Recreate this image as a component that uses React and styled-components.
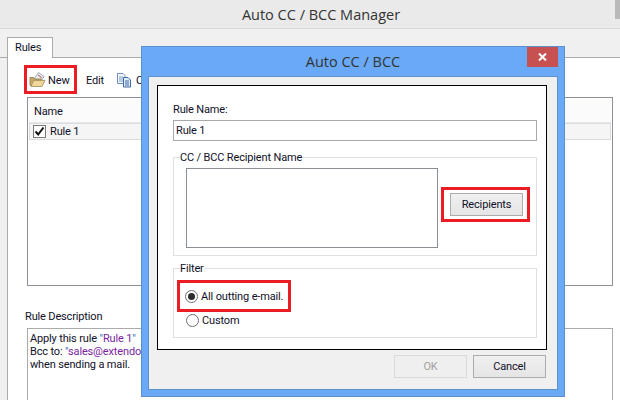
import React from 'react';
import styled, { createGlobalStyle } from 'styled-components';

const GlobalStyle = createGlobalStyle`
  html, body {
    margin: 0;
    padding: 0;
    background: #f0f0f0;
  }

  body {
    font-family: Roboto, "Liberation Sans", sans-serif;
    font-size: 11px;
    letter-spacing: -0.15px;
    color: #101028;
  }

  * {
    box-sizing: border-box;
  }
`;

const Screen = styled.div`
  width: 620px;
  height: 400px;
  position: relative;
  overflow: hidden;
  display: flex;
  flex-direction: column;
`;

const TitleBar = styled.div`
  height: 29px;
  flex: none;
  background: #eaeaea;
  border-bottom: 1px solid #d8d8d8;
  display: flex;
  justify-content: center;
  align-items: center;
  font-family: "Open Sans", sans-serif;
  font-size: 14.5px;
  letter-spacing: 0;
  color: #333;
  padding-left: 22px;
  position: relative;
`;

const ScrollThumb = styled.div`
  position: absolute;
  top: 0;
  right: 0;
  width: 5px;
  height: 19px;
  background: #b9b9b9;
`;

const TabStrip = styled.div`
  height: 29px;
  flex: none;
  padding: 8px 0 0 7px;
  display: flex;
  align-items: flex-end;
  border-bottom: 1px solid #ababab;
`;

const Tab = styled.div`
  width: 46px;
  height: 21px;
  margin-bottom: -1px;
  background: #fff;
  border: 1px solid #ababab;
  border-bottom: none;
  padding: 1px 0 0 7px;
  line-height: 17px;
  position: relative;
  z-index: 1;
`;

const TabPanel = styled.div`
  flex: 1;
  min-height: 0;
  margin-left: 7px;
  background: #fff;
  border-left: 1px solid #ababab;
  padding: 7px 7px 0 16px;
  display: flex;
  flex-direction: column;
`;

const Toolbar = styled.div`
  height: 29px;
  flex: none;
  display: flex;
  align-items: center;
`;

const Highlight = styled.div`
  border: 3px solid #ec1c24;
`;

const ToolLabel = styled.span`
  padding-top: 1px;
`;

const NewButton = styled(Highlight)`
  width: 53px;
  height: 29px;
  padding-left: 2px;
  display: flex;
  align-items: center;
  gap: 2px;
`;

const ToolItem = styled.div`
  margin-left: ${({ $gap }) => $gap};
  display: flex;
  align-items: center;
  gap: 4px;
`;

const ListBox = styled.div`
  height: 189px;
  flex: none;
  margin: 3px 0 0 3px;
  border: 1px solid #8b9097;
  padding: 1px;
`;

const ListHeader = styled.div`
  height: 24px;
  background: #fbfbfc;
  border-bottom: 1px solid #e6e9f0;
  padding: 1px 0 0 5px;
  display: flex;
  align-items: center;
`;

const ListRow = styled.div`
  height: 17px;
  background: #f5f5f5;
  border: 1px solid #dcdcdc;
  display: flex;
  align-items: center;
  gap: 4px;
  padding-left: 3px;
`;

const CheckBox = styled.div`
  width: 13px;
  height: 13px;
  border: 1px solid #7a7a7a;
  background: #fff;
  display: flex;
  align-items: center;
  justify-content: center;
`;

const SectionLabel = styled.div`
  margin: 23px 0 0 1px;
  height: 19px;
  line-height: 16px;
`;

const DescriptionBox = styled.div`
  flex: 1;
  margin-left: 3px;
  border: 1px solid #ababab;
  border-bottom: none;
  padding: 3px 0 0 2px;
  line-height: 13px;
`;

const Quoted = styled.span`
  color: ${({ $part }) => ($part === 'mark' ? '#2f6fb5' : '#7a1fa2')};
`;

const Dialog = styled.div`
  position: absolute;
  left: 141px;
  top: 46px;
  width: 424px;
  height: 351px;
  background: #69a9f6;
  border: 1px solid #5a8fd0;
  padding: 0 6px 6px;
  display: flex;
  flex-direction: column;
`;

const DialogTitle = styled.div`
  height: 29px;
  flex: none;
  display: flex;
  justify-content: center;
  align-items: center;
  font-family: "Open Sans", sans-serif;
  font-size: 14.5px;
  letter-spacing: 0;
  color: #333;
  position: relative;
`;

const CloseButton = styled.div`
  position: absolute;
  top: 0;
  right: 0;
  width: 31px;
  height: 20px;
  background: #c75050;
  display: flex;
  align-items: center;
  justify-content: center;
`;

const DialogBody = styled.div`
  flex: 1;
  background: #f0f0f0;
  border: 1px solid #5e92cf;
  padding: 8px 10px 0 8px;
  display: flex;
  flex-direction: column;
`;

const Frame = styled.div`
  height: 265px;
  flex: none;
  background: #fff;
  border: 1px solid #000;
  padding: 14px 9px 0 15px;
`;

const FieldLabel = styled.div`
  height: 20px;
  line-height: 20px;
`;

const TextInput = styled.div`
  height: 21px;
  background: #fff;
  border: 1px solid #a9a9a9;
  padding-left: 2px;
  line-height: 19px;
`;

const GroupBox = styled.fieldset`
  margin: ${({ $top }) => $top} 0 0;
  padding: 0;
  height: ${({ $height }) => $height};
  border: 1px solid #e0e0e0;
  position: relative;
`;

const GroupLegend = styled.legend`
  position: absolute;
  top: -8px;
  left: 6px;
  padding: 0;
  background: #fff;
  line-height: 16px;
`;

const RecipientRow = styled.div`
  padding: 10px 0 0 12px;
  display: flex;
  align-items: flex-start;
`;

const RecipientList = styled.div`
  width: 252px;
  height: 80px;
  border: 1px solid #8b9097;
`;

const RecipientHighlight = styled(Highlight)`
  width: 89px;
  height: 35px;
  margin: 19px 0 0 3px;
  display: flex;
  align-items: center;
  justify-content: center;
  padding-left: 2px;
`;

const PushButton = styled.div`
  width: 73px;
  height: 23px;
  border: 1px solid ${({ disabled }) => (disabled ? '#d9d9d9' : '#acacac')};
  background: ${({ disabled }) => (disabled
    ? '#efefef'
    : 'linear-gradient(#f0f0f0, #e5e5e5)')};
  color: ${({ disabled }) => (disabled ? '#a0a0a0' : 'inherit')};
  display: flex;
  align-items: center;
  justify-content: center;
`;

const RadioHighlight = styled(Highlight)`
  width: 114px;
  height: 32px;
  margin: 11px 0 0 3px;
  padding-left: 5px;
  display: flex;
  align-items: center;
  gap: 3px;
  white-space: nowrap;
`;

const RadioLine = styled.div`
  margin: 0 0 0 12px;
  height: 17px;
  display: flex;
  align-items: center;
  gap: 3px;
`;

const RadioDot = styled.div`
  width: 13px;
  height: 13px;
  border-radius: 50%;
  border: 1px solid #6f6f6f;
  background: #fff;
  display: flex;
  align-items: center;
  justify-content: center;

  &::after {
    content: "";
    width: 7px;
    height: 7px;
    border-radius: 50%;
    background: ${({ $checked }) => ($checked ? '#2b2b2b' : 'transparent')};
  }
`;

const DialogActions = styled.div`
  margin-top: 5px;
  padding-right: 1px;
  display: flex;
  justify-content: flex-end;
  gap: 6px;
`;

const FolderIcon = () => (
  <svg width="17" height="17" viewBox="0 0 17 17">
    <path d="M5 8 L9.5 1.5 L15 5.5 L13 9 Z" fill="#eef2f6" stroke="#8a94a4" strokeWidth="0.8" />
    <path d="M9 4 L13 7" stroke="#c2808a" strokeWidth="1.4" />
    <path d="M1 6.5 H4.5 L5.5 8 H12 V15 H2 L1 14 Z" fill="#c9a866" stroke="#8d7a4d" strokeWidth="0.8" />
    <path d="M2 15.5 L4.5 9.5 H16 L13 15.5 Z" fill="#f0d698" stroke="#a5905a" strokeWidth="0.8" />
  </svg>
);

const CopyIcon = () => (
  <svg width="16" height="16" viewBox="0 0 16 16">
    <path d="M1.5 1.5 H7 L9 3.5 V11.5 H1.5 Z" fill="#f2f6fb" stroke="#6f8fbb" />
    <path d="M3 5 H7 M3 7 H7 M3 9 H7" stroke="#7f9fc9" />
    <path d="M7.5 5.5 H12 L14.5 8 V15 H7.5 Z" fill="#dfeaf7" stroke="#3f6aa5" />
    <path d="M9 9 H13 M9 11 H13 M9 13 H13" stroke="#3f6aa5" />
  </svg>
);

const CheckMark = () => (
  <svg width="11" height="11" viewBox="0 0 11 11">
    <path d="M1.5 5.5 L4.2 8.5 L9.5 1.5" fill="none" stroke="#111" strokeWidth="2" />
  </svg>
);

const CloseGlyph = () => (
  <svg width="9" height="8" viewBox="0 0 9 8">
    <path d="M1 0.5 L8 7.5 M8 0.5 L1 7.5" stroke="#fff" strokeWidth="2" />
  </svg>
);

const App = () => (
  <Screen>
    <GlobalStyle />
    <TitleBar>
      Auto CC / BCC Manager
      <ScrollThumb />
    </TitleBar>
    <TabStrip>
      <Tab>Rules</Tab>
    </TabStrip>
    <TabPanel>
      <Toolbar>
        <NewButton>
          <FolderIcon />
          <ToolLabel>New</ToolLabel>
        </NewButton>
        <ToolItem $gap="9px"><ToolLabel>Edit</ToolLabel></ToolItem>
        <ToolItem $gap="12px">
          <CopyIcon />
          <ToolLabel>Copy</ToolLabel>
        </ToolItem>
      </Toolbar>
      <ListBox>
        <ListHeader>Name</ListHeader>
        <ListRow>
          <CheckBox><CheckMark /></CheckBox>
          Rule 1
        </ListRow>
      </ListBox>
      <SectionLabel>Rule Description</SectionLabel>
      <DescriptionBox>
        Apply this rule <Quoted $part="mark">"</Quoted><Quoted>Rule 1</Quoted><Quoted $part="mark">"</Quoted>
        <br />
        Bcc to: <Quoted $part="mark">"</Quoted><Quoted>sales@extendoffice.com</Quoted>
        <br />
        when sending a mail.
      </DescriptionBox>
    </TabPanel>

    <Dialog>
      <DialogTitle>
        Auto CC / BCC
        <CloseButton><CloseGlyph /></CloseButton>
      </DialogTitle>
      <DialogBody>
        <Frame>
          <FieldLabel>Rule Name:</FieldLabel>
          <TextInput>Rule 1</TextInput>
          <GroupBox $top="16px" $height="99px">
            <GroupLegend>CC / BCC Recipient Name</GroupLegend>
            <RecipientRow>
              <RecipientList />
              <RecipientHighlight>
                <PushButton>Recipients</PushButton>
              </RecipientHighlight>
            </RecipientRow>
          </GroupBox>
          <GroupBox $top="12px" $height="70px">
            <GroupLegend>Filter</GroupLegend>
            <RadioHighlight>
              <RadioDot $checked />
              All outting e-mail.
            </RadioHighlight>
            <RadioLine>
              <RadioDot />
              Custom
            </RadioLine>
          </GroupBox>
        </Frame>
        <DialogActions>
          <PushButton disabled>OK</PushButton>
          <PushButton>Cancel</PushButton>
        </DialogActions>
      </DialogBody>
    </Dialog>
  </Screen>
);

export default App;
